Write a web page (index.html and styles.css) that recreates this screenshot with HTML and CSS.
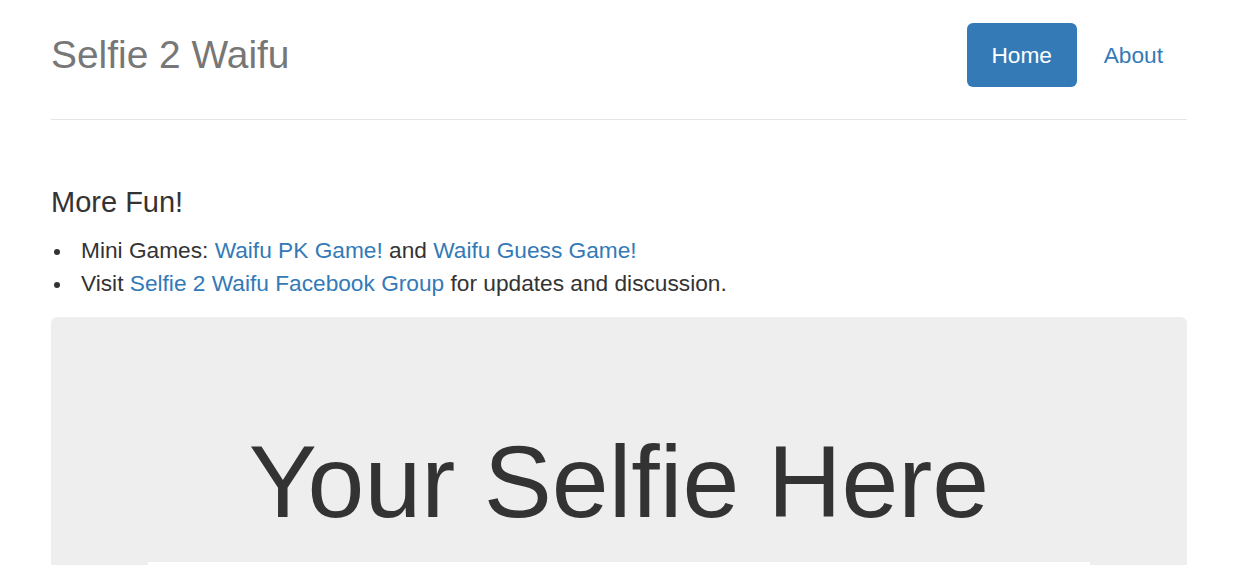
FILE: index.html
```html
<!DOCTYPE html>
<html lang="en">
<head>
<meta charset="utf-8">
<title>Selfie 2 Waifu</title>
<link rel="stylesheet" href="styles.css">
</head>
<body>
<div class="container">
  <header class="header">
    <h3 class="brand">Selfie 2 Waifu</h3>
    <nav class="nav">
      <a class="pill active" href="#">Home</a>
      <a class="pill" href="#">About</a>
    </nav>
  </header>

  <section class="fun">
    <h4 class="fun-title">More Fun!</h4>
    <ul class="fun-list">
      <li>Mini Games: <a href="#">Waifu PK Game!</a> and <a href="#">Waifu Guess Game!</a></li>
      <li>Visit <a href="#">Selfie 2 Waifu Facebook Group</a> for updates and discussion.</li>
    </ul>
  </section>

  <section class="jumbotron">
    <h1 class="jumbo-title">Your Selfie Here</h1>
    <div class="selfie-box"></div>
  </section>
</div>
</body>
</html>
```

FILE: styles.css
```css
html, body {
  margin: 0;
  padding: 0;
  background: #fff;
}

body {
  font-family: "Liberation Sans", Arial, sans-serif;
  font-size: 22.7px;
  line-height: 33px;
  color: #333;
  overflow: hidden;
}

a {
  color: #337ab7;
  text-decoration: none;
}

.container {
  width: 1136px;
  margin-left: 51px;
}

.header {
  display: flex;
  justify-content: space-between;
  align-items: flex-start;
  padding-top: 23px;
  padding-bottom: 32px;
  border-bottom: 1px solid #e5e5e5;
}

.brand {
  margin: 0;
  font-size: 38.9px;
  line-height: 64px;
  font-weight: 400;
  color: #777;
}

.nav {
  display: flex;
  gap: 3px;
}

.pill {
  display: block;
  padding: 16px 24px;
  line-height: 32px;
  font-size: 22.7px;
  border-radius: 6px;
  color: #337ab7;
}

.pill.active {
  background: #337ab7;
  color: #fff;
  width: 62px;
  text-align: center;
}

.fun {
  margin-top: 67px;
}

.fun-title {
  margin: 0 0 15px;
  font-size: 29px;
  line-height: 1.1;
  font-weight: 400;
  color: #333;
}

.fun-list {
  margin: 0 0 17px;
  padding-left: 30px;
  list-style: none;
}

.fun-list li::before {
  content: "";
  display: inline-block;
  width: 6px;
  height: 6px;
  border-radius: 50%;
  background: #333;
  margin-left: -27px;
  margin-right: 21px;
  vertical-align: middle;
}

.jumbotron {
  background: #eee;
  border-radius: 6px;
  padding-top: 109px;
  text-align: center;
  height: 400px;
  box-sizing: border-box;
}

.jumbo-title {
  margin: 0;
  font-size: 102.2px;
  line-height: 1.1;
  font-weight: 400;
  color: #333;
}

.selfie-box {
  width: 942px;
  height: 300px;
  margin: 24px auto 0;
  background: #fff;
}
```
